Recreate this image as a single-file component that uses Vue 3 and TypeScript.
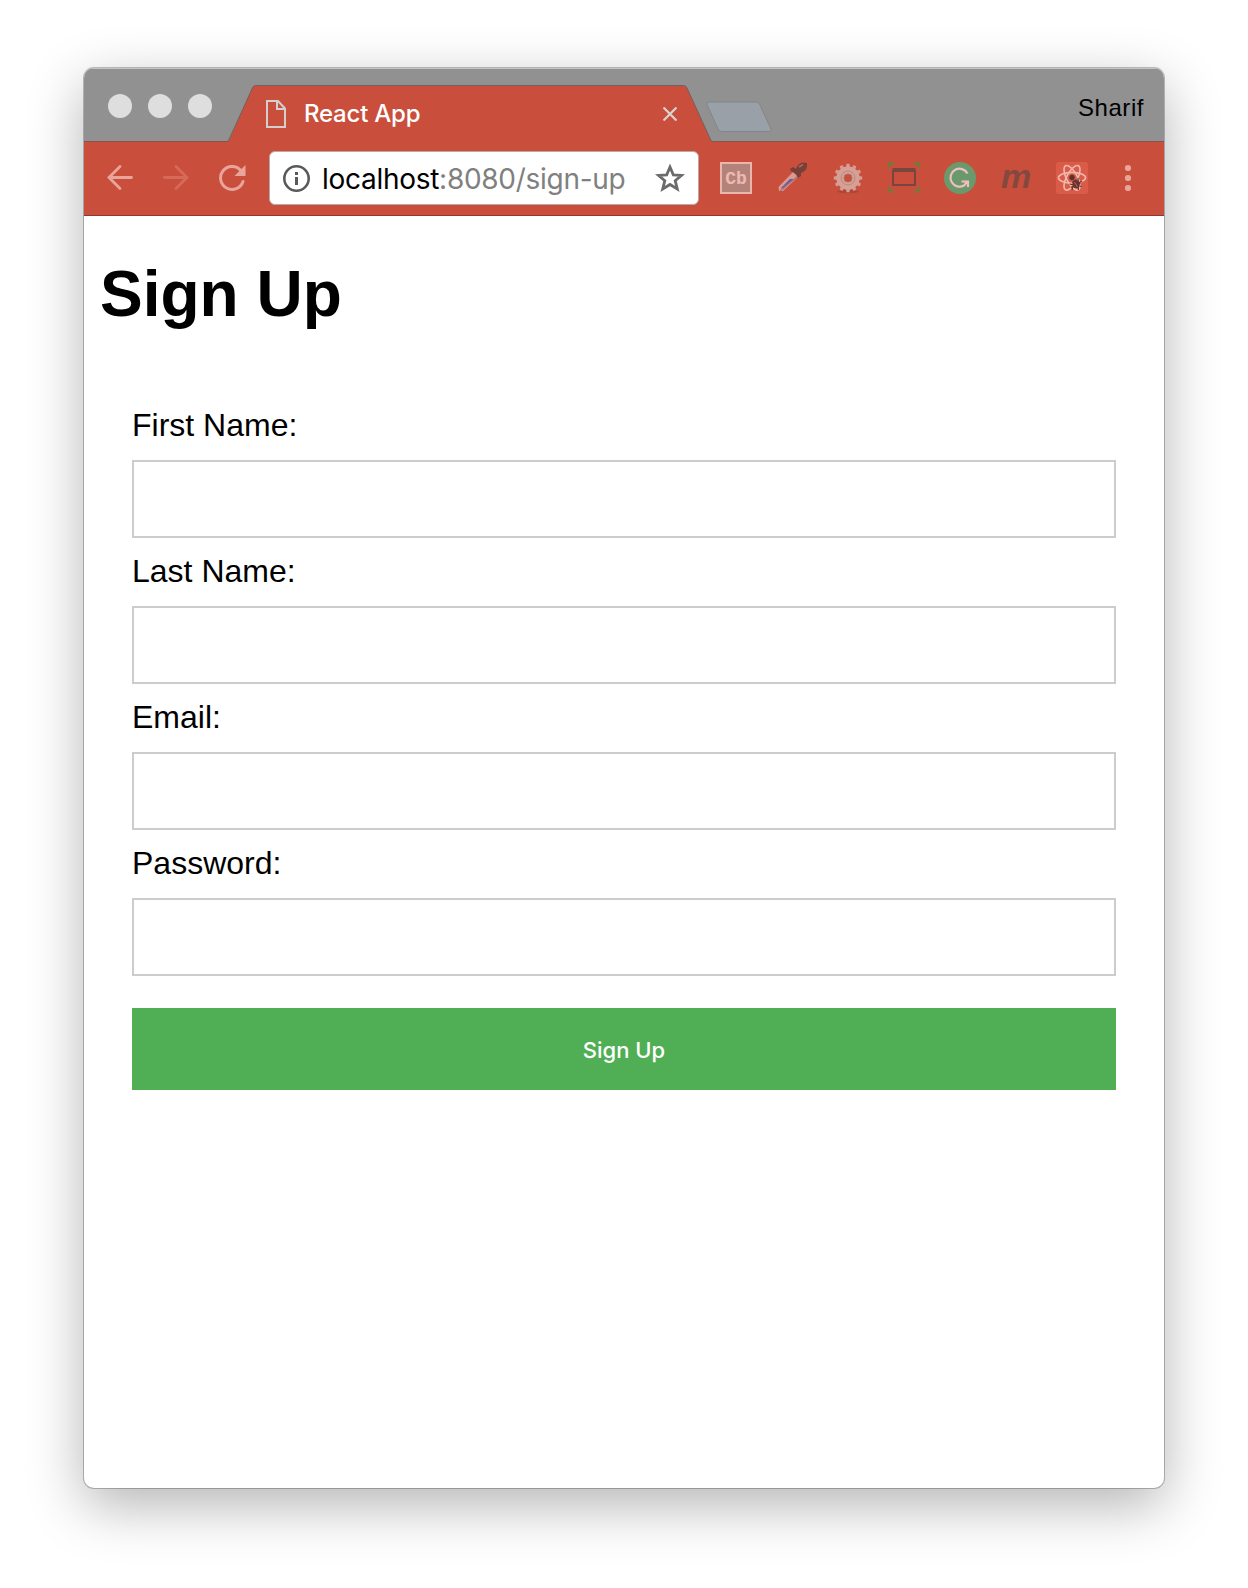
<script setup lang="ts">
import { reactive } from 'vue'

interface Field {
  id: 'firstName' | 'lastName' | 'email' | 'password'
  label: string
  type: string
}

const fields: Field[] = [
  { id: 'firstName', label: 'First Name:', type: 'text' },
  { id: 'lastName', label: 'Last Name:', type: 'text' },
  { id: 'email', label: 'Email:', type: 'email' },
  { id: 'password', label: 'Password:', type: 'password' },
]

const form = reactive({ firstName: '', lastName: '', email: '', password: '' })

const gearTeeth = Array.from({ length: 12 }, (_, i) => i * 30)
const orbits = [0, 62, 118]
const lights = ['close', 'minimize', 'zoom']
</script>

<template>
  <div class="desktop">
    <div class="window">
      <header class="titlebar">
        <div class="lights">
          <span v-for="l in lights" :key="l" class="light"></span>
        </div>
        <div class="tab">
          <svg class="tab-shape" width="486" height="57" viewBox="0 0 486 57">
            <path d="M0 57 L2 55.5 L25 3 Q26 0.5 28.5 0.5 H456.500 Q459 0.500 460 3 L484 55.500 L486 57 Z" fill="#c94f3c" />
            <path d="M0 56.500 Q1 56.500 2 54.500 L25.500 3 Q26.500 0.500 28.500 0.500 H456.500 Q459 0.500 460 3 L483.500 54.500 Q484.500 56.500 486 56.500" fill="none" stroke="#6f625f" />
          </svg>
          <svg class="file" width="20" height="28" viewBox="0 0 20 28" fill="none" stroke="#d2cfce" stroke-width="2">
            <path d="M1 1 H12 L19 8.500 V27 H1 Z M11 1 V9 H19" />
          </svg>
          <span class="tab-title">React App</span>
          <svg class="tab-close" width="14" height="14" viewBox="0 0 14 14" stroke="#d9d4d2" stroke-width="2.200">
            <path d="M0.500 0.500 L13.500 13.500 M13.500 0.500 L0.500 13.500" />
          </svg>
        </div>
        <svg class="new-tab" width="67" height="32" viewBox="0 0 67 32">
          <path d="M3 1 H50 Q52.500 1 53.500 3 L65 28 Q66 30.500 63.500 30.500 H16 Q13.500 30.500 12 28 L1 3.500 Q0.500 1 3 1 Z" fill="#99a0a7" stroke="#81868a" />
        </svg>
        <span class="profile">Sharif</span>
      </header>

      <nav class="toolbar">
        <svg class="back" width="28" height="28" viewBox="0 0 28 28" fill="none" stroke="#e9a59c" stroke-width="2.800" stroke-linecap="round">
          <path d="M25.500 13.500 H3 M14 2.500 L3 13.500 L14 24.500" />
        </svg>
        <svg class="forward" width="28" height="28" viewBox="0 0 28 28" fill="none" stroke="#d66a59" stroke-width="2.800" stroke-linecap="round">
          <path d="M2.500 13.500 H25 M14 2.500 L25 13.500 L14 24.500" />
        </svg>
        <svg class="reload" width="28" height="28" viewBox="0 0 28 28">
          <path d="M22.700 6.300 A11.500 11.500 0 1 0 25 17.500" fill="none" stroke="#e9a59c" stroke-width="3" stroke-linecap="round" />
          <path d="M27.500 1 V12 H16.500 Z" fill="#e9a59c" />
        </svg>
        <div class="omnibox">
          <svg class="info" width="28" height="28" viewBox="0 0 28 28">
            <circle cx="14.500" cy="14.500" r="12.200" fill="none" stroke="#5a5a5a" stroke-width="2.600" />
            <path d="M13 8 H16 V11 H13 Z M13 13 H16 V21 H13 Z" fill="#5a5a5a" />
          </svg>
          <span class="url"><span class="host">localhost</span>:8080/sign-up</span>
          <svg class="star" width="30" height="30" viewBox="0 0 30 30">
            <path d="M15 4 L18.300 11.800 L26.500 12.400 L20.200 17.700 L22.300 26 L15 21.500 L7.700 26 L9.800 17.700 L3.500 12.400 L11.700 11.800 Z" fill="none" stroke="#6b6b6b" stroke-width="2.800" />
          </svg>
        </div>
        <div class="extensions">
          <span class="cb">Cb</span>
          <svg width="32" height="32" viewBox="0 0 32 32">
            <path d="M3 29 L2.500 25 L17 10 L22 15 L7 29 Z" fill="#d99a90" />
            <path d="M5 26 L14 17 L18 17 L7 27.500 Z" fill="#6957a5" />
            <path d="M4 29 L22 14" stroke="#a77478" stroke-width="1.300" />
            <path d="M14 7 L17 5 L20 7 Q22 1 27 0.500 L31 1 V5 Q30 9 25 11 L25 14 L22 16 L20 12 L15 9 Z" fill="#783f38" />
            <path d="M23 5 L27 2.500" stroke="#a3665c" stroke-width="2" />
          </svg>
          <svg width="32" height="32" viewBox="0 0 32 32">
            <ellipse cx="16" cy="29.500" rx="11" ry="1.800" fill="#b04636" />
            <path v-for="a in gearTeeth" :key="a" d="M13.800 7 L14.500 1.800 H17.500 L18.200 7 Z" :transform="`rotate(${a} 16 16)`" fill="#d49c92" />
            <circle cx="16" cy="16" r="7.800" fill="none" stroke="#d6a096" stroke-width="7.600" />
            <circle cx="16" cy="16" r="7" fill="none" stroke="#c1857b" stroke-width="1" />
            <circle cx="16" cy="16" r="4" fill="#c94f3c" stroke="#b06c61" stroke-width="1" />
          </svg>
          <svg width="32" height="32" viewBox="0 0 32 32">
            <path d="M0 0 H7 L0 7 Z M25 0 H32 V7 Z M0 24 L7 30.500 H0 Z M32 24 V30.500 H25 Z" fill="#7b7637" />
            <path d="M6 6 H26 Q28 6 28 8 V24 H4 V8 Q4 6 6 6 Z M6 10 V22 H26 V10 Z" fill="#78463f" fill-rule="evenodd" />
          </svg>
          <svg width="32" height="32" viewBox="0 0 32 32">
            <circle cx="16" cy="16" r="16" fill="#69996d" />
            <path d="M23.500 11.500 A9 9 0 1 0 20 23.500 L23.500 19.500 M17.500 19.500 H24 V25" fill="none" stroke="#efc1ba" stroke-width="2.200" />
          </svg>
          <span class="m">m</span>
          <svg width="32" height="32" viewBox="0 0 32 32">
            <rect width="32" height="32" rx="2.500" fill="#d95b48" />
            <ellipse v-for="a in orbits" :key="a" cx="16" cy="15.800" rx="13.600" ry="5.400" :transform="`rotate(${a} 16 15.800)`" fill="none" stroke="#f0b7ae" stroke-width="1.600" />
            <circle cx="16" cy="15.500" r="2.700" fill="#60302b" />
            <path d="M16 20 L20 17 L24.500 21 L22 26 L18 26 Z" fill="#65352f" />
            <path d="M13.500 22 L25.500 24.500 M16 28 L18.500 18 M22.500 28 L22 16 M26 19 L15 25.500" stroke="#65352f" stroke-width="1.200" />
            <path d="M18.500 20 L21.500 25" stroke="#d95b48" stroke-width="1" />
          </svg>
        </div>
        <svg class="menu" width="8" height="28" viewBox="0 0 8 28" fill="#e9a59c">
          <circle cx="4" cy="4" r="3.100" />
          <circle cx="4" cy="14" r="3.100" />
          <circle cx="4" cy="24" r="3.100" />
        </svg>
      </nav>

      <main class="page">
        <h1>Sign Up</h1>
        <form @submit.prevent>
          <div v-for="f in fields" :key="f.id" class="field">
            <label :for="f.id">{{ f.label }}</label>
            <input :id="f.id" v-model="form[f.id]" :type="f.type" />
          </div>
          <button type="submit">Sign Up</button>
        </form>
      </main>
    </div>
  </div>
</template>

<style>
body {
  background: #fff;
}
</style>

<style scoped>
.desktop {
  box-sizing: border-box;
  height: 1588px;
  padding: 68px 84px 100px;
  overflow: hidden;
}

svg {
  display: block;
  flex: none;
}

.window {
  display: flex;
  flex-direction: column;
  height: 1420px;
  border-radius: 10px;
  overflow: hidden;
  background: #fff;
  box-shadow: 0 0 0 1px rgba(0, 0, 0, 0.24), 0 17px 56px rgba(0, 0, 0, 0.3);
}

.titlebar {
  box-sizing: border-box;
  display: flex;
  align-items: flex-start;
  height: 74px;
  background: #919191;
  border-top: 1px solid #c4c4c4;
  border-bottom: 1px solid #84564f;
}

.lights {
  display: flex;
  gap: 16px;
  padding: 25px 0 0 24px;
}

.light {
  width: 24px;
  height: 24px;
  border-radius: 50%;
  background: #dedede;
}

.tab {
  position: relative;
  display: flex;
  align-items: center;
  box-sizing: border-box;
  width: 486px;
  height: 57px;
  margin: 16px 0 0 15px;
  padding: 0 36px 0 39px;
}

.tab-shape {
  position: absolute;
  left: 0;
  top: 0;
}

.file,
.tab-title,
.tab-close {
  position: relative;
}

.tab-title {
  flex: 1;
  margin-left: 18px;
  color: #fff;
  font: 500 24px/30px Inter, sans-serif;
  letter-spacing: -0.22px;
}

.new-tab {
  margin: 32px 0 0 -7px;
}

.profile {
  margin: 24px 20px 0 auto;
  font: 24px/30px "Liberation Sans", Arial, sans-serif;
  letter-spacing: 0.55px;
}

.toolbar {
  box-sizing: border-box;
  display: flex;
  align-items: center;
  height: 74px;
  padding: 0 32px 2px 22px;
  background: #c94f3c;
  border-bottom: 1px solid #8f382b;
}

.forward {
  margin-left: 28px;
}

.reload {
  margin-left: 28px;
}

.omnibox {
  box-sizing: border-box;
  display: flex;
  align-items: center;
  width: 430px;
  height: 54px;
  margin: 1px 0 0 23px;
  padding: 0 13px 0 12px;
  background: #fff;
  border: 1px solid #b9a9a6;
  border-radius: 6px;
}

.url {
  flex: 1;
  margin-left: 12px;
  padding-top: 2px;
  color: #808080;
  font: 28px/34px Inter, sans-serif;
  letter-spacing: -0.28px;
  white-space: nowrap;
}

.host {
  color: #000;
}

.extensions {
  display: flex;
  align-items: center;
  gap: 24px;
  margin-left: 21px;
}

.cb {
  box-sizing: border-box;
  width: 32px;
  height: 32px;
  border: 2px solid #ebb5ac;
  background: #b3837b;
  color: #efb9b0;
  font: bold 18px/30px "Liberation Mono", monospace;
  text-align: center;
}

.m {
  width: 32px;
  height: 32px;
  color: #84483f;
  font: italic bold 34px/28px "Liberation Sans", Arial, sans-serif;
  text-align: center;
}

.menu {
  margin-left: auto;
}

.page {
  flex: 1;
  padding: 0 16px;
  color: #000;
  font: 32px/36px "Liberation Sans", Arial, sans-serif;
}

h1 {
  margin: 41px 0 0;
  font-size: 64px;
  line-height: 74px;
}

form {
  padding: 75px 32px 0;
}

.field {
  height: 146px;
}

label {
  display: block;
  height: 54px;
  line-height: 38px;
}

input {
  display: block;
  box-sizing: border-box;
  width: 100%;
  height: 78px;
  margin: 0;
  padding: 0 20px;
  border: 2px solid #ccc;
  border-radius: 0;
  background: #fff;
  font: inherit;
  outline: none;
}

button {
  display: block;
  width: 100%;
  height: 82px;
  margin: 18px 0 0;
  padding: 2px 0 0;
  border: 0;
  background: #50af55;
  color: #fff;
  font: 500 22px/28px Inter, sans-serif;
}
</style>
